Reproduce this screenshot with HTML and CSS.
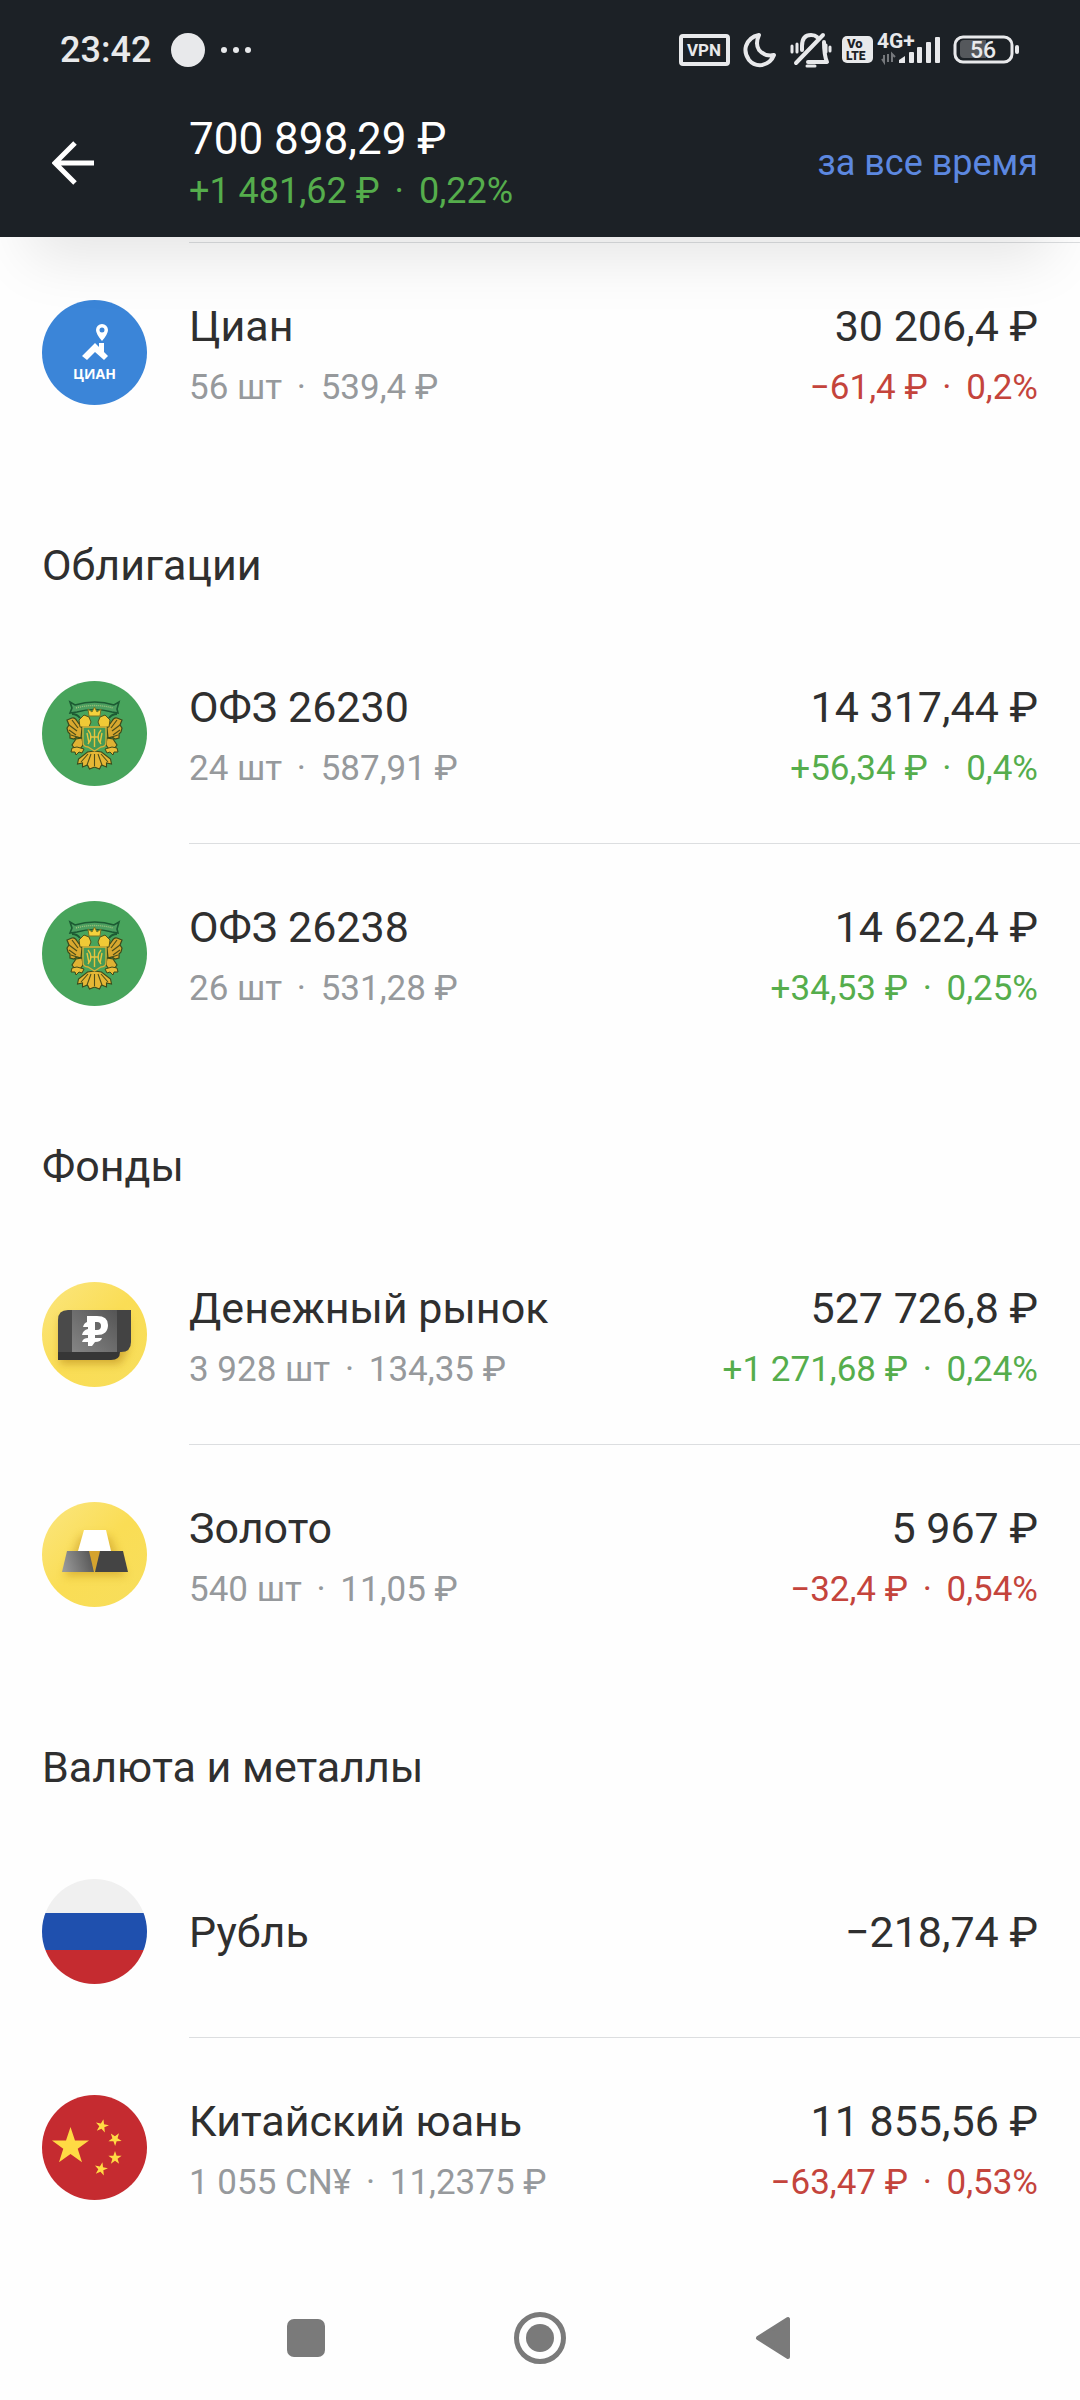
FILE: index.html
```html
<!DOCTYPE html>
<html lang="ru">
<head>
    <meta charset="UTF-8">
    <meta name="viewport" content="width=device-width, initial-scale=1.0">
    <title>Портфель</title>
    <link rel="stylesheet" href="styles.css">
</head>
<body>

    <!-- shared shapes -->
    <svg class="sprite" width="0" height="0" aria-hidden="true">
        <defs>
            <linearGradient id="yellow" x1="0" y1="0" x2="1" y2="1">
                <stop offset="0" stop-color="#fbe680"/>
                <stop offset="0.5" stop-color="#fadd55"/>
                <stop offset="1" stop-color="#f7de5c"/>
            </linearGradient>
            <linearGradient id="panel" x1="0" y1="1" x2="1" y2="0">
                <stop offset="0" stop-color="#858585"/>
                <stop offset="1" stop-color="#555"/>
            </linearGradient>
            <linearGradient id="silver" x1="0" y1="0.6" x2="1" y2="0.4">
                <stop offset="0" stop-color="#999"/>
                <stop offset="1" stop-color="#555"/>
            </linearGradient>
            <filter id="soft" x="-30%" y="-30%" width="160%" height="170%">
                <feGaussianBlur stdDeviation="4"/>
            </filter>
            <clipPath id="round"><circle cx="52.5" cy="52.5" r="52.5"/></clipPath>
        </defs>
        <symbol id="star" viewBox="-10 -10 20 20">
            <path fill="#ffda44" d="M0-10 2.3-3.1H9.5L3.7 1.2 5.9 8.1 0 3.9-5.9 8.1-3.7 1.2-9.5-3.1H-2.3z"/>
        </symbol>
        <symbol id="emblem" viewBox="0 0 105 105">
            <circle cx="52.5" cy="52.5" r="52.5" fill="#48a45c"/>
            <!-- ribbon -->
            <path d="M28 21l5 3q20-6 39 0l5-3-2 7 1 4-6-1q-18-5-35 0l-7 1 2-5z" fill="#4c9f60" stroke="#1c5b33" stroke-width="1.6"/>
            <path d="M34 27q18-5 37 0" fill="none" stroke="#a4c47e" stroke-width="1.3" stroke-dasharray="1 1"/>
            <path d="M30 33q5 0 8 4M75 33q-5 0-8 4" fill="none" stroke="#1c5b33" stroke-width="2"/>
            <!-- wings, claws and tail -->
            <g id="wing">
                <path d="M40 47l-5-7q-2-4-5-3l-5 2 2 5-2 3 1 4 2 2 0 4 4 1 3-2 4 1z" fill="#d9a82f" stroke="#3c4a1a" stroke-width="1.2"/>
                <path d="M27 44l8 6M27 49l7 5M29 54l6 2M30 39l6 8" stroke="#4f501a" stroke-width="1.2" fill="none"/>
                <path d="M37 39l5-5 5 2 2 5-2 5H38z" fill="#efc936" stroke="#4f501a" stroke-width="1"/>
                <path d="M34 58l6-1 1 7-3 4-5 0-3-4z" fill="#dfb233" stroke="#3c4a1a" stroke-width="1.1"/>
                <path d="M30 67l5-1 7 2-2 4-3-1-3 3-1-3-4 0z" fill="#e8bd37" stroke="#3c4a1a" stroke-width="1"/>
            </g>
            <use href="#wing" transform="matrix(-1 0 0 1 105 0)"/>
            <path d="M52.5 70l-7 1-9 7-1 5 5-1 0 4 5-2 2 4 5-2 5 2 2-4 5 2 0-4 5 1-1-5-9-7z" fill="#e5b735" stroke="#3c4a1a" stroke-width="1.1"/>
            <path d="M52.5 73v12M49 73l-4 11M56 73l4 11M46 73l-7 8M59 73l7 8" stroke="#4f501a" stroke-width="1.1" fill="none"/>
            <!-- crown and shield -->
            <path d="M47 35l-1-7 4 3 2.5-5 2.5 5 4-3-1 7z" fill="#f5d23d" stroke="#7c7420" stroke-width="1"/>
            <path d="M41 46h23v15q0 5-5 5l-6.5 4-6.5-4q-5 0-5-5z" fill="#459a56" stroke="#d8b136" stroke-width="1.3"/>
            <path d="M52.5 48v18M46 49q6 7 0 14M59 49q-6 7 0 14M48 56h9M45 52l2 10M60 52l-2 10" fill="none" stroke="#e6c43e" stroke-width="1.4"/>
        </symbol>
    </svg>

    <header class="top">
        <div class="status">
            <span class="time">23:42</span>
            <svg class="notice" width="82" height="34" viewBox="0 0 82 34" fill="#e8e9eb">
                <circle cx="17" cy="17" r="17"/>
                <circle cx="53" cy="17" r="3"/><circle cx="65" cy="17" r="3"/><circle cx="77" cy="17" r="3"/>
            </svg>
            <svg class="indicators" width="342" height="40" viewBox="678 30 342 40" fill="none" stroke="#e8e9eb" stroke-width="3">
                <rect x="681" y="36" width="47" height="28" rx="2" stroke-width="4"/>
                <text class="glyph" x="704" y="56" font-size="17" text-anchor="middle">VPN</text>
                <path d="M759 35q-4 9 0 15 6 7 15 5-3 8-12 10-8 1-13-5-5-7-3-14 3-9 13-11z" stroke-width="4" stroke-linejoin="round"/>
                <g stroke-linecap="round" stroke-linejoin="round">
                    <path d="M802 50v-4q0-11 9-11 4 0 6 2M824 42q0 13 3 20h-19M796 63l27-28" stroke-width="4"/>
                    <path d="M792 46v6M797 44v8M826 45v7M830 47v4" stroke-width="3"/>
                    <path d="M807 66h8" stroke-width="3"/>
                </g>
                <rect x="842" y="36" width="31" height="27" rx="5" fill="#e8e9eb" stroke="none"/>
                <text class="glyph dark" x="847" y="48" font-size="13">Vo</text>
                <text class="glyph dark" x="846" y="60" font-size="12">LTE</text>
                <text class="glyph" x="877" y="48" font-size="21">4G+</text>
                <path d="M884 55v7l-2-3M888 54v8M892 62v-8l3 3" stroke="#75787c" stroke-width="2"/>
                <g fill="#e8e9eb" stroke="none">
                    <path d="M899 63v-3l6-4v7z"/>
                    <rect x="909" y="52" width="5" height="11" rx="1"/>
                    <rect x="917" y="47" width="5" height="16" rx="1"/>
                    <rect x="926" y="42" width="5" height="21" rx="1"/>
                    <rect x="935" y="37" width="5" height="26" rx="1"/>
                    <rect x="1015" y="45" width="4" height="9" rx="2"/>
                </g>
                <rect x="955" y="37" width="57" height="25" rx="8"/>
                <path d="M964 40h22v18h-22q-4 0-4-4v-10q0-4 4-4z" fill="#55585c" stroke="none"/>
                <text class="glyph charge" x="983" y="58" font-size="23" text-anchor="middle">56</text>
            </svg>
        </div>
        <div class="toolbar">
            <button class="back" type="button" aria-label="Назад">
                <svg width="44" height="44" viewBox="0 0 44 44" fill="none" stroke="#fff" stroke-width="5">
                    <path d="M42 22H5M23 2L3 22l20 20"/>
                </svg>
            </button>
            <div class="total">
                <h1>700 898,29 ₽</h1>
                <p class="up">+1 481,62 ₽ <span class="dot">·</span> 0,22%</p>
            </div>
            <a class="period" href="#">за все время</a>
        </div>
    </header>

    <main>
        <ul class="list continued">
            <li class="row">
                <svg class="logo" viewBox="0 0 105 105">
                    <circle cx="52.5" cy="52.5" r="52.5" fill="#3b85d8"/>
                    <path d="M60 24a6 6 0 0 1 6 6q0 4-6 11-6-7-6-11a6 6 0 0 1 6-6zm0 3.5a2.5 2.5 0 1 0 0 5 2.5 2.5 0 0 0 0-5z" fill="#fff" fill-rule="evenodd"/>
                    <path d="M40 56l13-13 4 4v-4h5v9l4 4-4 4-9-8-8 8z" fill="#fff"/>
                    <text class="brand" x="52.5" y="79" text-anchor="middle">ЦИАН</text>
                </svg>
                <div class="content">
                    <div class="cell">
                        <h3>Циан</h3>
                        <p>56 шт <span class="dot">·</span> 539,4 ₽</p>
                    </div>
                    <div class="cell amount">
                        <strong>30 206,4 ₽</strong>
                        <p class="down">−61,4 ₽ <span class="dot">·</span> 0,2%</p>
                    </div>
                </div>
            </li>
        </ul>

        <h2>Облигации</h2>
        <ul class="list">
            <li class="row">
                <svg class="logo"><use href="#emblem"/></svg>
                <div class="content">
                    <div class="cell">
                        <h3>ОФЗ 26230</h3>
                        <p>24 шт <span class="dot">·</span> 587,91 ₽</p>
                    </div>
                    <div class="cell amount">
                        <strong>14 317,44 ₽</strong>
                        <p class="up">+56,34 ₽ <span class="dot">·</span> 0,4%</p>
                    </div>
                </div>
            </li>
            <li class="row">
                <svg class="logo"><use href="#emblem"/></svg>
                <div class="content">
                    <div class="cell">
                        <h3>ОФЗ 26238</h3>
                        <p>26 шт <span class="dot">·</span> 531,28 ₽</p>
                    </div>
                    <div class="cell amount">
                        <strong>14 622,4 ₽</strong>
                        <p class="up">+34,53 ₽ <span class="dot">·</span> 0,25%</p>
                    </div>
                </div>
            </li>
        </ul>

        <h2>Фонды</h2>
        <ul class="list">
            <li class="row">
                <svg class="logo" viewBox="0 0 105 105">
                    <circle cx="52.5" cy="52.5" r="52.5" fill="url(#yellow)"/>
                    <path d="M18 36h68v32l-8 14H18z" fill="#b98a1c" opacity="0.6" filter="url(#soft)"/>
                    <path d="M30 28h59v32q0 10-10 10H30z" fill="#434343"/>
                    <path d="M26 28h49v42H16V38q0-10 10-10z" fill="#4a4a4a"/>
                    <path d="M16 70h62q0 8-9 8H16z" fill="#363636"/>
                    <rect x="30" y="28" width="45" height="42" fill="url(#panel)"/>
                    <path d="M45 34h10q11 0 11 9 0 10-11 10h-2v3h7q-1 4-7 4l-3 4h-4v-4h-6q1-4 6-4v-3h-6q1-5 6-6v-2h-5q1-4 4-5zm8 6v8h2q4 0 4-4t-4-4z" fill="#fff" fill-rule="evenodd"/>
                </svg>
                <div class="content">
                    <div class="cell">
                        <h3>Денежный рынок</h3>
                        <p>3 928 шт <span class="dot">·</span> 134,35 ₽</p>
                    </div>
                    <div class="cell amount">
                        <strong>527 726,8 ₽</strong>
                        <p class="up">+1 271,68 ₽ <span class="dot">·</span> 0,24%</p>
                    </div>
                </div>
            </li>
            <li class="row">
                <svg class="logo" viewBox="0 0 105 105">
                    <circle cx="52.5" cy="52.5" r="52.5" fill="url(#yellow)"/>
                    <path d="M38 34h30l16 40H22z" fill="#c08f1a" opacity="0.5" filter="url(#soft)"/>
                    <path d="M45 49h16l-8 21z" fill="#d5a32e"/>
                    <path d="M42 28h22l5 21H36z" fill="#fff"/>
                    <path d="M25 49h22l5 21H20z" fill="url(#silver)"/>
                    <path d="M58 49h23l5 21H53z" fill="#444"/>
                </svg>
                <div class="content">
                    <div class="cell">
                        <h3>Золото</h3>
                        <p>540 шт <span class="dot">·</span> 11,05 ₽</p>
                    </div>
                    <div class="cell amount">
                        <strong>5 967 ₽</strong>
                        <p class="down">−32,4 ₽ <span class="dot">·</span> 0,54%</p>
                    </div>
                </div>
            </li>
        </ul>

        <h2>Валюта и металлы</h2>
        <ul class="list">
            <li class="row short">
                <svg class="logo" viewBox="0 0 105 105">
                    <g clip-path="url(#round)">
                        <rect width="105" height="105" fill="#f0f0f0"/>
                        <rect y="34" width="105" height="37" fill="#1f50ae"/>
                        <rect y="71" width="105" height="34" fill="#c52b30"/>
                    </g>
                </svg>
                <div class="content">
                    <div class="cell">
                        <h3>Рубль</h3>
                    </div>
                    <div class="cell amount">
                        <strong>−218,74 ₽</strong>
                    </div>
                </div>
            </li>
            <li class="row">
                <svg class="logo" viewBox="0 0 105 105">
                    <circle cx="52.5" cy="52.5" r="52.5" fill="#c52b30"/>
                    <use href="#star" x="9" y="32" width="39" height="39"/>
                    <use href="#star" x="-7" y="-7" width="14" height="14" transform="translate(60 31) rotate(12)"/>
                    <use href="#star" x="-7" y="-7" width="14" height="14" transform="translate(73 44) rotate(35)"/>
                    <use href="#star" x="-7" y="-7" width="14" height="14" transform="translate(73 63)"/>
                    <use href="#star" x="-7" y="-7" width="14" height="14" transform="translate(59 74) rotate(12)"/>
                </svg>
                <div class="content">
                    <div class="cell">
                        <h3>Китайский юань</h3>
                        <p>1 055 CN¥ <span class="dot">·</span> 11,2375 ₽</p>
                    </div>
                    <div class="cell amount">
                        <strong>11 855,56 ₽</strong>
                        <p class="down">−63,47 ₽ <span class="dot">·</span> 0,53%</p>
                    </div>
                </div>
            </li>
        </ul>
    </main>

    <nav class="system">
        <button type="button" aria-label="Недавние">
            <svg width="60" height="60" viewBox="0 0 60 60"><rect x="11" y="11" width="38" height="38" rx="7"/></svg>
        </button>
        <button type="button" aria-label="Домой">
            <svg width="60" height="60" viewBox="0 0 60 60">
                <circle cx="30" cy="30" r="23.5" fill="none" stroke="#7a7a7a" stroke-width="5"/>
                <circle cx="30" cy="30" r="14"/>
            </svg>
        </button>
        <button type="button" aria-label="Назад">
            <svg width="60" height="60" viewBox="0 0 60 60"><path d="M44 11v38L14 30z" stroke="#7a7a7a" stroke-width="4" stroke-linejoin="round"/></svg>
        </button>
    </nav>

</body>
</html>
```
FILE: styles.css
```css
* {
    box-sizing: border-box;
}
body {
    margin: 0;
    background: #fefefe;
    color: #2f2f2f;
    font-family: Roboto, "Noto Sans", sans-serif;
}
h1, h2, h3, p, ul {
    margin: 0;
    padding: 0;
    font-weight: 400;
}
button {
    padding: 0;
    border: none;
    background: none;
    cursor: pointer;
}
svg {
    display: block;
}
.sprite {
    position: absolute;
}
.top {
    position: sticky;
    top: 0;
    z-index: 1;
    padding-bottom: 11px;
    background: #1c2126;
    box-shadow: 0 50px 60px -30px rgba(0, 0, 0, 0.1);
}
.status {
    display: flex;
    align-items: center;
    height: 100px;
    padding: 0 60px;
}
.time {
    color: #e8e9eb;
    font-size: 36px;
    font-weight: 500;
}
.notice {
    margin-left: 20px;
}
.indicators {
    margin-left: auto;
}
.glyph {
    fill: #e8e9eb;
    stroke: none;
    font-weight: 700;
}
.glyph.dark {
    fill: #1c2126;
    font-weight: 900;
}
.glyph.charge {
    font-weight: 500;
}
.toolbar {
    display: flex;
    align-items: center;
    height: 126px;
    padding: 0 42px;
}
.back {
    width: 105px;
    margin-right: 42px;
    padding-left: 10px;
}
.total h1 {
    color: #fff;
    font-size: 44px;
    line-height: 56px;
}
.total p {
    font-size: 36px;
    line-height: 48px;
}
.period {
    margin-left: auto;
    color: #5c88e0;
    font-size: 36px;
    text-decoration: none;
}
.dot {
    margin: 0 6px;
}
.list {
    list-style: none;
}
.continued {
    padding-top: 5px;
}
h2 {
    padding: 73px 42px 29px;
    font-size: 43px;
    line-height: 60px;
}
.row {
    display: flex;
    align-items: center;
    padding-left: 42px;
}
.logo {
    flex: none;
    width: 105px;
    height: 105px;
    margin-right: 42px;
}
.brand {
    fill: #fff;
    font-size: 14px;
    font-weight: 700;
    font-family: "Open Sans", sans-serif;
}
.content {
    display: flex;
    flex: 1;
    align-items: center;
    justify-content: space-between;
    min-height: 219px;
    padding-right: 42px;
}
.short .content {
    min-height: 211px;
}
.row + .row .content,
.continued .content {
    min-height: 220px;
    border-top: 1px solid #dcdee0;
}
.cell h3,
.cell strong {
    display: block;
    font-size: 43px;
    font-weight: 400;
    line-height: 70px;
}
.cell p {
    color: #96999c;
    font-size: 35px;
    line-height: 54px;
}
.amount {
    text-align: right;
}
.total .up,
.cell .up {
    color: #55ad4c;
}
.cell .down {
    color: #c4443c;
}
.system {
    display: flex;
    justify-content: center;
    gap: 174px;
    padding: 51px 0 32px;
}
.system svg {
    fill: #7a7a7a;
}
```
